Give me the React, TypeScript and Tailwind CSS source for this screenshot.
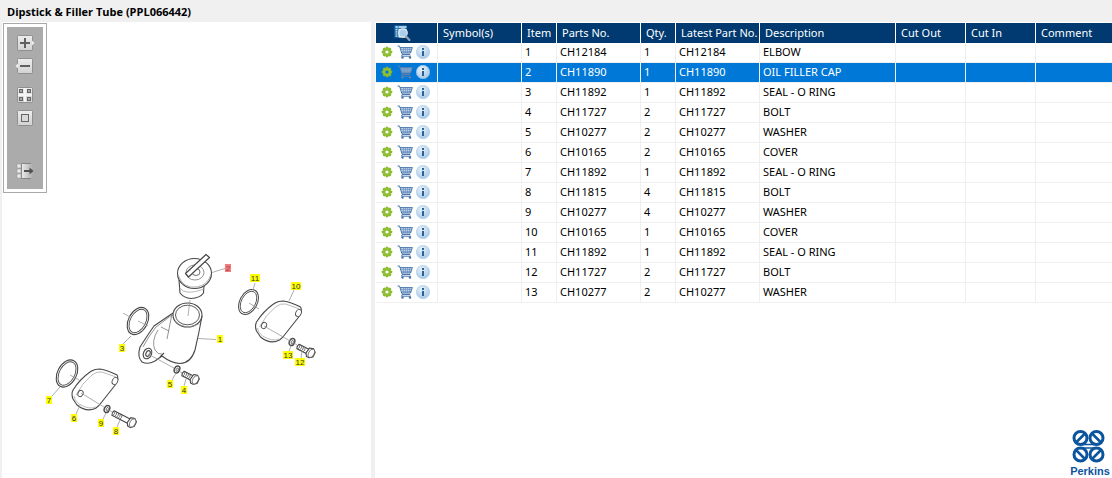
import type { ReactNode } from "react";

type Part = {
  item: number;
  no: string;
  qty: number;
  desc: string;
};

const parts: Part[] = [
  { item: 1, no: "CH12184", qty: 1, desc: "ELBOW" },
  { item: 2, no: "CH11890", qty: 1, desc: "OIL FILLER CAP" },
  { item: 3, no: "CH11892", qty: 1, desc: "SEAL - O RING" },
  { item: 4, no: "CH11727", qty: 2, desc: "BOLT" },
  { item: 5, no: "CH10277", qty: 2, desc: "WASHER" },
  { item: 6, no: "CH10165", qty: 2, desc: "COVER" },
  { item: 7, no: "CH11892", qty: 1, desc: "SEAL - O RING" },
  { item: 8, no: "CH11815", qty: 4, desc: "BOLT" },
  { item: 9, no: "CH10277", qty: 4, desc: "WASHER" },
  { item: 10, no: "CH10165", qty: 1, desc: "COVER" },
  { item: 11, no: "CH11892", qty: 1, desc: "SEAL - O RING" },
  { item: 12, no: "CH11727", qty: 2, desc: "BOLT" },
  { item: 13, no: "CH10277", qty: 2, desc: "WASHER" },
];

const selectedItem = 2;

const GearIcon = () => (
  <svg width="12" height="12" viewBox="0 0 12 12">
    <g fill="#86b52b">
      <rect x="4.7" y="0.8" width="2.6" height="10.4" rx="0.6" />
      <rect x="4.7" y="0.8" width="2.6" height="10.4" rx="0.6" transform="rotate(45 6 6)" />
      <rect x="4.7" y="0.8" width="2.6" height="10.4" rx="0.6" transform="rotate(90 6 6)" />
      <rect x="4.7" y="0.8" width="2.6" height="10.4" rx="0.6" transform="rotate(135 6 6)" />
    </g>
    <circle cx="6" cy="6" r="2.9" fill="none" stroke="#8fc031" strokeWidth="2.4" />
    <circle cx="6" cy="6" r="1.6" className="fill-white group-aria-selected:fill-[#0078d7]" />
  </svg>
);

const CartIcon = () => (
  <svg width="16" height="14" viewBox="0 0 16 14">
    <path d="M3.5 3H15l-1.5 5H5z" className="fill-[#bdd0e8] group-aria-selected:fill-[#7fa9d8]" />
    <path d="M3.5 4.5h11M4.5 6.5h9.5M6.5 3v5M8.5 3v5M10.5 3v5M12.5 3v5" stroke="#7396c2" strokeWidth="0.7" />
    <path d="M0.5 1h2l2.7 8.5h8M15.3 2.5L13.6 8H5M3 2.6h12.5M5.5 9.5l-1 1.700h9.5" fill="none" strokeWidth="1" className="stroke-[#4a76ad] group-aria-selected:stroke-[#5c7fae]" />
    <g className="fill-[#4a76ad] group-aria-selected:fill-[#5c7fae]">
      <circle cx="5.5" cy="12.5" r="1.2" />
      <circle cx="13" cy="12.5" r="1.2" />
    </g>
  </svg>
);

const InfoIcon = () => (
  <svg width="14" height="14" viewBox="0 0 14 14">
    <defs>
      <radialGradient id="info" cx="0.4" cy="0.3" r="0.8">
        <stop offset="0" stopColor="#e6f2fb" />
        <stop offset="1" stopColor="#9fc3e4" />
      </radialGradient>
    </defs>
    <circle cx="7" cy="7" r="6.7" fill="url(#info)" stroke="#a9c9e6" strokeWidth="0.6" />
    <path d="M6 3h2v2H6zM6 6h2v5H6z" fill="#2e6095" />
  </svg>
);

const SearchListIcon = () => (
  <svg width="17" height="16" viewBox="0 0 17 16">
    <rect x="0.5" y="0.5" width="12" height="12" fill="#2f7ab4" />
    <rect x="1" y="1" width="12" height="2" fill="#4aa0da" />
    <path d="M2 2h1.5M5 2h7" stroke="#fff" strokeWidth="1" />
    <path d="M2.5 4v8" stroke="#c9e2f4" strokeWidth="1.6" strokeDasharray="1.2 1" />
    <rect x="4.5" y="4" width="8" height="8.5" fill="#e5f0f8" />
    <circle cx="9" cy="8" r="4.2" fill="#a9cfea" stroke="#e3e9ee" strokeWidth="1.3" />
    <path d="M12.2 11.4l3.2 3.6" stroke="#8fa3b5" strokeWidth="2.2" strokeLinecap="round" />
  </svg>
);

const ToolButton = ({ label, children }: { label: string; children: ReactNode }) => (
  <button type="button" aria-label={label} className="block h-4 w-5 cursor-pointer">
    <svg width="20" height="16" viewBox="0 0 20 16">
      <defs>
        <linearGradient id="tool" x1="0" y1="0" x2="0" y2="1">
          <stop offset="0" stopColor="#ededed" />
          <stop offset="1" stopColor="#d2d2d2" />
        </linearGradient>
        <linearGradient id="fade" x1="0" y1="0" x2="1" y2="0">
          <stop offset="0" stopColor="#e8e8e8" />
          <stop offset="1" stopColor="#ababab" />
        </linearGradient>
      </defs>
      {children}
    </svg>
  </button>
);

const ToolFace = () => (
  <rect x="2.5" y="0.5" width="15" height="15" rx="1" fill="url(#tool)" stroke="#8f8f8f" />
);

function Toolbar() {
  return (
    <div className="ml-px mt-px w-11 border border-[#a9a9a9] bg-white p-[3px]">
      <div role="toolbar" className="flex h-[162px] flex-col items-center bg-[#ababab] pt-2">
        <ToolButton label="Zoom in">
          <ToolFace />
          <path d="M17 5.5l2.5 2.5-2.5 2.5z" fill="#ededed" />
          <path d="M10 3v10M5 8h10" stroke="#606060" strokeWidth="2" />
        </ToolButton>
        <div className="mt-[7px]">
          <ToolButton label="Zoom out">
            <ToolFace />
            <path d="M3 5.5L.5 8 3 10.5z" fill="#ededed" />
            <path d="M5 8h10" stroke="#606060" strokeWidth="2" />
          </ToolButton>
        </div>
        <div className="mt-[13px]">
          <ToolButton label="Show tiles">
            <ToolFace />
            <path d="M10 1v14M3 8h14" stroke="#f5f5f5" strokeWidth="2" />
            <g fill="#aaa" stroke="#666">
              <rect x="4.5" y="2.5" width="3" height="3" />
              <rect x="12.5" y="2.5" width="3" height="3" />
              <rect x="4.5" y="10.5" width="3" height="3" />
              <rect x="12.5" y="10.5" width="3" height="3" />
            </g>
          </ToolButton>
        </div>
        <div className="mt-[7px]">
          <ToolButton label="Fit to window">
            <ToolFace />
            <rect x="6.5" y="4.5" width="7" height="7" fill="#d9d9d9" stroke="#666" />
          </ToolButton>
        </div>
        <div className="mt-[37px]">
          <ToolButton label="Toggle panel">
            <rect x="7" y="1" width="11" height="14" fill="url(#fade)" />
            <path d="M7 .5h9M7 15.5h9M6.500 .5v15" stroke="#858585" />
            <rect x="2" y="1" width="4" height="4" fill="#e8e8e8" stroke="#999" strokeWidth="0.6" />
            <rect x="2" y="6" width="4" height="4" fill="#e8e8e8" stroke="#999" strokeWidth="0.6" />
            <rect x="2" y="11" width="4" height="4" fill="#e8e8e8" stroke="#999" strokeWidth="0.6" />
            <path d="M9 8h7" stroke="#505050" strokeWidth="2" />
            <path d="M14.500 4.500L18.500 8l-4 3.500z" fill="#505050" />
          </ToolButton>
        </div>
      </div>
    </div>
  );
}

const callouts = [
  { n: 1, x: 220, y: 339 },
  { n: 2, x: 228, y: 268 },
  { n: 3, x: 122, y: 348 },
  { n: 4, x: 184, y: 390 },
  { n: 5, x: 170, y: 384 },
  { n: 6, x: 74, y: 418 },
  { n: 7, x: 49, y: 400 },
  { n: 8, x: 116, y: 431 },
  { n: 9, x: 101, y: 423 },
  { n: 10, x: 296, y: 286 },
  { n: 11, x: 255, y: 278 },
  { n: 12, x: 300, y: 362 },
  { n: 13, x: 288, y: 355 },
];

const Ring = ({ x, y }: { x: number; y: number }) => (
  <g transform={`translate(${x} ${y}) rotate(28)`}>
    <ellipse rx="9.5" ry="14.5" />
    <ellipse rx="7.7" ry="12.6" strokeWidth="0.9" />
  </g>
);

const Washer = ({ x, y }: { x: number; y: number }) => (
  <g transform={`translate(${x} ${y}) rotate(25)`}>
    <ellipse rx="2.6" ry="3.6" strokeWidth="1.4" />
    <ellipse cx="0.3" rx="1" ry="1.8" strokeWidth="0.7" />
  </g>
);

// drawn lying along the x axis with the thread end at the origin
const Bolt = ({ x, y, length, thread }: { x: number; y: number; length: number; thread: number }) => (
  <g transform={`translate(${x} ${y}) rotate(27)`} fill="#fff">
    <path d={`M0 -2.500H${length}V2.500H0Q-1.500 0 0 -2.500z`} />
    {Array.from({ length: Math.floor(thread / 2) }, (_, i) => (
      <path key={i} d={`M${i * 2 + 1} -2.500q1.200 2.500 0 5`} strokeWidth="0.7" />
    ))}
    <path d={`M${length} -4l4 -1 3 2.500v5l-3 2.500h-3l-2 -3z`} />
    <ellipse cx={length + 4} cy="0" rx="2.700" ry="4.500" strokeWidth="0.7" />
  </g>
);

const Cover = ({ x, y }: { x: number; y: number }) => (
  <g transform={`translate(${x} ${y})`} fill="#fff">
    <path d="M1 21Q-1 25 1 30L5 36Q15 44 24 39Q27 37 29 34L44 15Q47 9 45 6Q35 1 28 0Q22 0 18 3Q8 10 1 21z" />
    <path d="M2 27Q2 31 7 35Q17 41 24 38M4 26Q10 14 20 6Q25 2 30 3L44 8" fill="none" stroke="#aaa" strokeWidth="0.8" />
    <ellipse cx="43" cy="12" rx="2.700" ry="3.700" transform="rotate(25 43 12)" strokeWidth="0.9" />
    <ellipse cx="8.500" cy="24.500" rx="2.500" ry="3.200" transform="rotate(25 8.5 24.5)" strokeWidth="0.9" />
  </g>
);

function Diagram() {
  return (
    <svg width="369" height="276" viewBox="2 193 369 276" role="img" aria-label="Dipstick and filler tube exploded view">
      <g fill="none" stroke="#484848" strokeWidth="1.1" strokeLinejoin="round">
        <Ring x={138} y={321} />
        <Ring x={67} y={373.5} />
        <g transform="translate(248.500 302) scale(.92)">
          <Ring x={0} y={0} />
        </g>

        {/* elbow */}
        <path d="M173 313L154 326Q147 336 140 347Q137 357 142 362Q148 365 155 361L162 356Q171 363 180 363.500Q191 363 195 350Q199 333 202 316" fill="#fff" />
        <path d="M172 315L156 327Q148 337 143 347M158 330Q151 341 155 350Q158 355 162 354M172 314L167 339M161 327l8 4" strokeWidth="0.8" stroke="#777" />
        <path d="M160 357l4-4" />
        <ellipse cx="187.500" cy="315" rx="14.500" ry="12" fill="#fff" />
        <ellipse cx="187.500" cy="315" rx="12" ry="9.800" strokeWidth="0.9" />
        <path d="M175 321Q184 331 199 324" stroke="#999" strokeWidth="0.7" />
        <ellipse cx="147.500" cy="353.500" rx="4" ry="5.500" transform="rotate(25 147.500 353.500)" />
        <ellipse cx="148" cy="353.500" rx="2" ry="3" transform="rotate(25 148 353.500)" />

        {/* filler cap */}
        <path d="M179 280l1 13Q184 298 191 298.500Q200 298 203.500 293l.5-8z" fill="#fff" />
        <path d="M179.500 288Q186 296 204 289" stroke="#999" strokeWidth="0.7" />
        <ellipse cx="194.500" cy="273.500" rx="17" ry="15" fill="#fff" />
        <path d="M178 275Q183 289 197 287Q208 285 211 274" stroke="#999" strokeWidth="0.8" />
        <ellipse cx="195" cy="272.500" rx="9" ry="7.500" strokeWidth="0.8" stroke="#777" />
        <ellipse cx="196" cy="272" rx="4" ry="3.500" strokeWidth="0.8" />
        <path d="M185.500 273.500L206 254.500L209.500 257.500L188.500 277z" fill="#fff" strokeWidth="1.200" />

        <Cover x={72} y={369} />
        <Cover x={255.5} y={301} />
        <Washer x={177} y={369.5} />
        <Washer x={107} y={409} />
        <Washer x={292} y={342} />
        <Bolt x={183} y={373.5} length={10} thread={9} />
        <Bolt x={113} y={413} length={18} thread={10} />
        <Bolt x={298} y={346.5} length={11} thread={9} />

        <g stroke="#999" strokeWidth="0.8">
          <path d="M190 300l-2 16M123 313l7 4M138 321l10 5M148 354l26 14M179 371l3 2M70 375l9 5M81 393l23 14M109 410l3 2M249 303l10 6M264 326l26 15M294 343l3 2" />
          <path d="M212 272.500l13-4M198 338.500l18 1M131 336l-8 8M172 380l4-7M184 386l2-7M52 396l8-9M76 414l4-9M103 419l3-6M117 427l3-7M255 283l-2 7M294 290l-5 11M289 351l2-5M301 358l1-7" />
        </g>
      </g>
      {callouts.map(({ n, x, y }) => (
        <g key={n}>
          <rect x={x - (n > 9 ? 5 : 3)} y={y - 4} width={n > 9 ? 10 : 6} height="8" fill={n === selectedItem ? "#f47c7c" : "#ffff00"} />
          <text x={x} y={y + 3} textAnchor="middle" fontSize="8" fill={n === selectedItem ? "#a83c3c" : "#333"} className="font-['Liberation_Sans',sans-serif]">
            {n}
          </text>
        </g>
      ))}
    </svg>
  );
}

const PerkinsLogo = () => (
  <svg width="42" height="48" viewBox="0 0 42 48" role="img" aria-label="Perkins">
    <g fill="none" stroke="#0b559f" strokeWidth="3">
      <circle cx="12.500" cy="8" r="6.500" />
      <circle cx="28.500" cy="8" r="6.500" />
      <circle cx="12.500" cy="24.500" r="6.500" />
      <circle cx="28.500" cy="24.500" r="6.500" />
      <path d="M17 3.500l-9 9M24 3.500l9 9M8 20l9 9M33 20l-9 9" strokeWidth="2.500" />
      <path d="M12 14.500h17M12 18h17" strokeWidth="1.500" />
    </g>
    <text x="22" y="45" textAnchor="middle" fontSize="11" fontWeight="700" fill="#0b559f" className="font-['Liberation_Sans',sans-serif]">
      Perkins
    </text>
  </svg>
);

const Th = ({ children }: { children: ReactNode }) => (
  <th className="h-5 whitespace-nowrap border-r border-white p-0 pl-[5px] text-left font-normal last:border-r-0">{children}</th>
);

const Td = ({ children }: { children?: ReactNode }) => (
  <td className="whitespace-nowrap border-b border-r border-[#efefef] p-0 pb-0.5 pl-[3px] last:border-r-0">{children}</td>
);

function PartsTable() {
  return (
    <table className="w-full table-fixed border-separate border-spacing-0 text-[11px] leading-4">
      <colgroup>
        <col className="w-[62px]" />
        <col className="w-[84px]" />
        <col className="w-[35px]" />
        <col className="w-[84px]" />
        <col className="w-[35px]" />
        <col className="w-[84px]" />
        <col className="w-[136px]" />
        <col className="w-[70px]" />
        <col className="w-[70px]" />
        <col />
      </colgroup>
      <thead>
        <tr className="bg-[#003a70] text-white">
          <th className="h-5 border-r border-white p-0 pl-[18px]">
            <button type="button" aria-label="Search parts" className="block cursor-pointer"><SearchListIcon /></button>
          </th>
          <Th>Symbol(s)</Th>
          <Th>Item</Th>
          <Th>Parts No.</Th>
          <Th>Qty.</Th>
          <Th>Latest Part No.</Th>
          <Th>Description</Th>
          <Th>Cut Out</Th>
          <Th>Cut In</Th>
          <Th>Comment</Th>
        </tr>
      </thead>
      <tbody>
        {parts.map((p) => (
          <tr
            key={p.item}
            aria-selected={p.item === selectedItem}
            className="group h-5 aria-selected:bg-[#0078d7] aria-selected:text-white"
          >
            <td className="border-b border-r border-[#efefef] p-0 pb-px">
              <div className="flex items-center pl-[5px]">
                <button type="button" aria-label="Options" className="mr-1 cursor-pointer"><GearIcon /></button>
                <button type="button" aria-label="Add to cart" className="mr-[3px] cursor-pointer"><CartIcon /></button>
                <button type="button" aria-label="Information" className="cursor-pointer"><InfoIcon /></button>
              </div>
            </td>
            <Td />
            <Td>{p.item}</Td>
            <Td>{p.no}</Td>
            <Td>{p.qty}</Td>
            <Td>{p.no}</Td>
            <Td>{p.desc}</Td>
            <Td />
            <Td />
            <Td />
          </tr>
        ))}
      </tbody>
    </table>
  );
}

export default function App() {
  return (
    <div className="flex min-h-screen flex-col bg-[#f0f0f0] font-['Noto_Sans','Open_Sans',sans-serif] text-black">
      <h1 className="h-[22px] pl-[7px] pt-1 font-['Open_Sans','Noto_Sans',sans-serif] text-[11px] font-bold leading-4">
        Dipstick &amp; Filler Tube (PPL066442)
      </h1>
      <main className="flex flex-1 gap-1 pl-0.5">
        <section className="w-[369px] shrink-0 bg-white">
          <Toolbar />
          <Diagram />
        </section>
        <section className="flex min-w-0 flex-1 flex-col bg-white pl-px pt-px">
          <PartsTable />
          <div className="mt-auto flex justify-end pr-0.5">
            <PerkinsLogo />
          </div>
        </section>
      </main>
    </div>
  );
}
